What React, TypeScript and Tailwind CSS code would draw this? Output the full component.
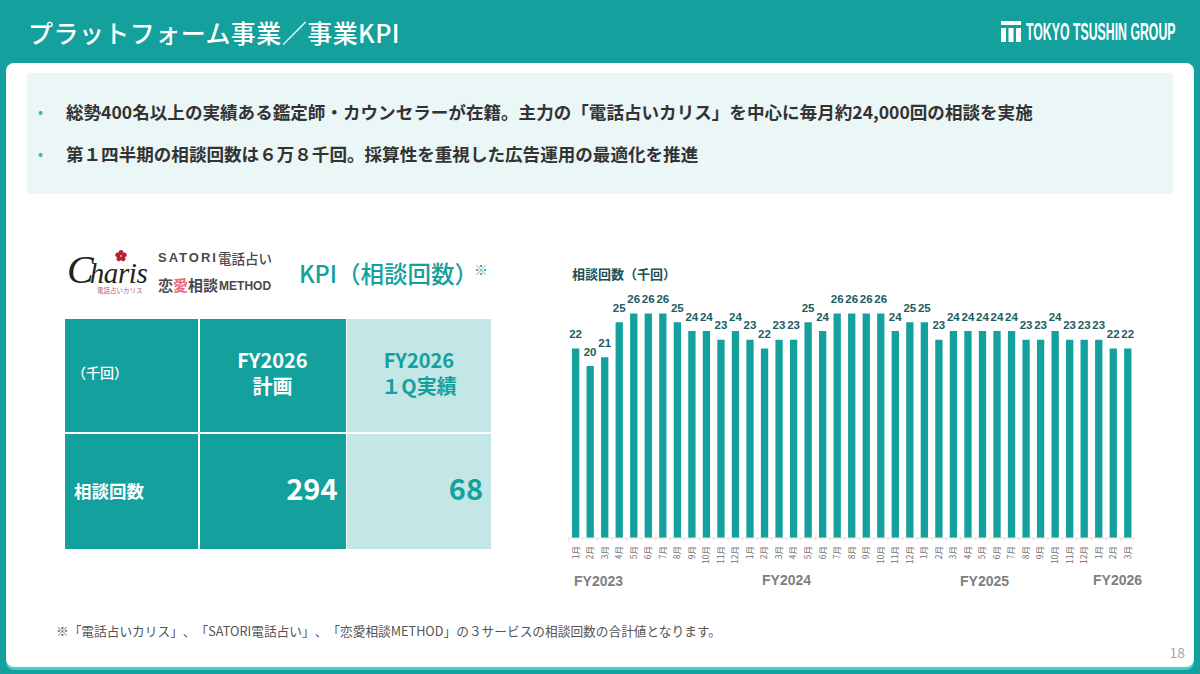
const JP = "font-['Noto_Sans_CJK_JP','Noto_Sans',sans-serif] [text-spacing-trim:space-all]";
const vals = [22,20,21,25,26,26,26,25,24,24,23,24,23,22,23,23,25,24,26,26,26,26,24,25,25,23,24,24,24,24,24,23,23,24,23,23,23,22,22];
const months = [1,2,3,4,5,6,7,8,9,10,11,12,1,2,3,4,5,6,7,8,9,10,11,12,1,2,3,4,5,6,7,8,9,10,11,12,1,2,3];
const fy = [["FY2023",574,586],["FY2024",762,585],["FY2025",960,586],["FY2026",1093,585]] as const;

function Chart() {
  const ox = 560, oy = 290;
  const base = 538 - oy;
  return (
    <svg width="600" height="310" viewBox="0 0 600 310" className="block">
      <g fontFamily="'Noto Sans CJK JP',sans-serif">
        {vals.map((v, i) => {
          const x = 572 - ox + i * 14.53;
          const h = 8.75 * v - 3;
          return (
            <g key={i}>
              <rect x={x} y={base - h} width="7.3" height={h} fill="#14a09c" />
              <text x={x + 3.6} y={base - h - 10.5} textAnchor="middle" fontSize="11.5" fontWeight="700" fill="#1d5c5f" fontFamily="'Liberation Sans',sans-serif">{v}</text>
              <line x1={x - 3.6} x2={x - 3.6} y1={base} y2={base + 3} stroke="#eadcd8" />
              <text transform={`translate(${x + 6.5},${base + 8}) rotate(-90)`} textAnchor="end" fontSize="8.5" fill="#6f6f6f">{months[i]}月</text>
            </g>
          );
        })}
        <line x1={572 - ox - 3.6} x2={572 - ox + 39 * 14.53 - 3.6} y1={base} y2={base} stroke="#eadcd8" />
        {fy.map(([t, x, y]) => (
          <text key={t} x={x - ox} y={y - oy} fontSize="14" fontWeight="700" fill="#7f7f7f" fontFamily="'Liberation Sans',sans-serif">{t}</text>
        ))}
      </g>
    </svg>
  );
}

function CharisLogo() {
  return (
    <div className="relative w-[80px] h-[50px]">
      <svg width="12" height="12" viewBox="0 0 20 20" className="absolute left-[50px] top-[-2px]">
        {[0,72,144,216,288].map(a => (
          <ellipse key={a} cx="10" cy="5" rx="4" ry="5" fill="#b5222f" transform={`rotate(${a} 10 10)`} />
        ))}
        <circle cx="10" cy="10" r="1.5" fill="#f4c6c6" />
      </svg>
      <div className="absolute left-[2px] top-0 font-['Liberation_Serif',serif] italic text-[#222] whitespace-nowrap leading-[36px] flex items-baseline">
        <span className="text-[40px] leading-[36px]">C</span>
        <span className="text-[29px] leading-[36px] tracking-[-0.4px] -ml-[4px]">haris</span>
      </div>
      <div className={`absolute left-[32px] top-[33px] text-[6.5px] leading-[10px] text-[#c2555f] whitespace-nowrap ${JP}`}>電話占いカリス</div>
    </div>
  );
}

function ServiceLogos() {
  return (
    <div className={`flex flex-col gap-[7px] ${JP}`}>
      <div className="flex items-center text-[#4a4a4a] leading-[18px] whitespace-nowrap">
        <span className="font-['Liberation_Sans',sans-serif] text-[13px] font-bold tracking-[2px] w-[60px]">SATORI</span>
        <span className="text-[13.5px] font-medium">電話占い</span>
      </div>
      <div className="flex items-center text-[#4a4a4a] leading-[18px] whitespace-nowrap text-[15px] font-bold">
        <span>恋</span><span className="text-[#e8687c]">愛</span><span>相談</span>
        <span className="relative font-['Liberation_Sans',sans-serif] text-[12px] ml-[1px] mt-[3px]">METHOD</span>
      </div>
    </div>
  );
}

export default function App() {
  return (
    <div className={`w-[1200px] h-[674px] bg-[#14a09c] flex flex-col overflow-hidden ${JP}`}>
      <header className="h-[63px] shrink-0 flex items-center justify-between pl-[28px] pr-[25px]">
        <h1 className="text-[25px] leading-[34px] font-medium text-white tracking-[0.45px] whitespace-nowrap">プラットフォーム事業／事業KPI</h1>
        <div className="flex items-center gap-[5px] text-white">
          <svg width="20" height="21" viewBox="0 0 20 21">
            <rect x="0" y="0" width="20" height="4" fill="#fff" />
            <rect x="0" y="7" width="5" height="14" fill="#fff" />
            <rect x="7.5" y="7" width="5" height="14" fill="#fff" />
            <rect x="15" y="7" width="5" height="14" fill="#fff" />
          </svg>
          <span className="font-['Liberation_Sans',sans-serif] text-[23px] leading-[24px] font-bold mt-[1px] w-[149px] whitespace-nowrap origin-left scale-x-[0.535] inline-block">TOKYO TSUSHIN GROUP</span>
        </div>
      </header>

      <main className="relative mx-[6px] h-[604px] bg-white rounded-[8px] shadow-[0_3px_0_#3fd0cb] px-[21px] pt-[10px]">
        <section className="h-[121px] bg-[#ebf6f7] rounded-[4px] flex flex-col justify-center gap-[20px] pb-[2px] pl-[11px] text-[17.57px] leading-[22px] font-bold text-[#333]">
          <p className="flex whitespace-nowrap"><span className="w-[28px] text-[13px] text-[#3fb5a9]">•</span>総勢400名以上の実績ある鑑定師・カウンセラーが在籍。主力の「電話占いカリス」を中心に毎月約24,000回の相談を実施</p>
          <p className="flex whitespace-nowrap"><span className="w-[28px] text-[13px] text-[#3fb5a9]">•</span>第１四半期の相談回数は６万８千回。採算性を重視した広告運用の最適化を推進</p>
        </section>

        <div className="flex">
          <div className="w-[533px] pl-[38px] shrink-0">
            <div className="h-[125px] pt-[58px] flex items-start">
              <CharisLogo />
              <div className="ml-[13px] -mt-[3px]"><ServiceLogos /></div>
              <div className="ml-[27px] mt-[4px] text-[23.5px] leading-[34px] font-medium text-[#14a09c] whitespace-nowrap">KPI（相談回数）</div>
              <div className="text-[14px] leading-[16px] mt-[9px] -ml-[4px] text-[#14a09c]">※</div>
            </div>
            <div className="grid grid-cols-[133px_146px_144px] grid-rows-[113px_115px] gap-[1.5px] w-[426px] h-[230px]">
              <div className="bg-[#14a09c] text-white text-[14px] font-medium flex items-center pl-[7px] pb-[6px]">（千回）</div>
              <div className="bg-[#14a09c] text-white text-[20px] leading-[26px] font-bold flex items-center justify-center text-center pb-[6px]">FY2026<br />計画</div>
              <div className="bg-[#c3e6e6] text-[#14a09c] text-[20px] leading-[26px] font-bold flex items-center justify-center text-center pb-[6px]">FY2026<br />１Q実績</div>
              <div className="bg-[#14a09c] text-white text-[17.5px] font-bold flex items-center pl-[9px]">相談回数</div>
              <div className="bg-[#14a09c] text-white text-[29px] font-bold flex items-center justify-end pr-[8px] pb-[6px]">294</div>
              <div className="bg-[#c3e6e6] text-[#14a09c] text-[29px] font-bold flex items-center justify-end pr-[8px] pb-[6px]">68</div>
            </div>
          </div>
          <div className="flex-1">
            <div className="mt-[71px] ml-[12px] h-[25px] text-[13px] leading-[18px] font-bold text-[#234f52]">相談回数（千回）</div>
            <Chart />
          </div>
        </div>

        <p className="absolute left-[50px] top-[560px] text-[12.7px] leading-[16px] text-[#555]">※「電話占いカリス」、「SATORI電話占い」、「恋愛相談METHOD」の３サービスの相談回数の合計値となります。</p>
        <span className="absolute right-[9px] bottom-[5px] text-[14px] leading-[20px] text-[#a6a6a6]">18</span>
      </main>
    </div>
  );
}
